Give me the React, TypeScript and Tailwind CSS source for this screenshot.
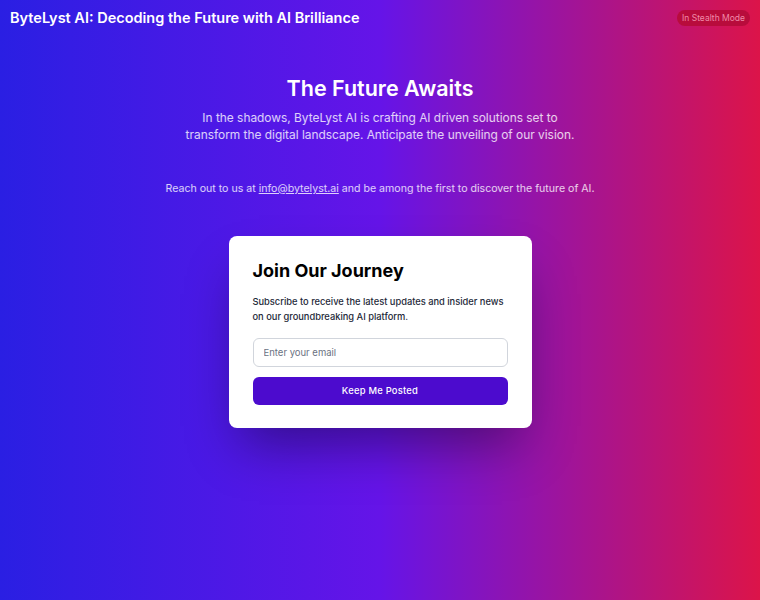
export default function App() {
  return (
    <div
      className="w-full h-[600px] overflow-hidden bg-[linear-gradient(to_right,#2a1fe3_0%,#6514e8_50%,#dc1449_100%)] text-white"
      style={{ fontFamily: "Inter, 'Noto Sans', sans-serif" }}
    >
      <header className="flex items-center justify-between px-[10px] pt-[8px]">
        <h1 className="text-[14.5px] font-semibold leading-[20px]">
          ByteLyst AI: Decoding the Future with AI Brilliance
        </h1>
        <span className="rounded-full bg-[#b80c3c] px-[5px] py-[3px] text-[8.5px] leading-[10px] text-[#f08aa8]">
          In Stealth Mode
        </span>
      </header>

      <main className="flex flex-col items-center">
        <h2 className="mt-[46px] text-[21.5px] font-semibold leading-[28px]">The Future Awaits</h2>
        <p className="mt-[7px] max-w-[400px] text-center text-[11.9px] leading-[17px] text-white/80">
          In the shadows, ByteLyst AI is crafting AI driven solutions set to transform the digital landscape. Anticipate the unveiling of our vision.
        </p>
        <p className="mt-[39px] text-center text-[10.6px] leading-[14px] text-white/80">
          Reach out to us at <a className="underline">info@bytelyst.ai</a> and be among the first to discover the future of AI.
        </p>

        <div className="mt-[40px] w-[303px] rounded-lg bg-white px-6 pt-[23px] pb-[23px] text-gray-900 shadow-[0_28px_50px_-12px_rgba(0,0,0,0.4)]">
          <h3 className="text-[18px] font-bold leading-[24px] text-black">Join Our Journey</h3>
          <p className="mt-[11px] text-[9.3px] leading-[15px] font-medium text-gray-800">
            Subscribe to receive the latest updates and insider news on our groundbreaking AI platform.
          </p>
          <input
            type="email"
            placeholder="Enter your email"
            className="mt-[14px] block h-[29px] w-full rounded-md border border-gray-300 px-[10px] text-[9.5px] text-gray-700 placeholder:text-gray-500 outline-none"
          />
          <button className="mt-[10px] block h-[28px] w-full rounded-md bg-[#4c0bce] text-[9.4px] font-medium tracking-wide text-white">
            Keep Me Posted
          </button>
        </div>
      </main>
    </div>
  );
}
